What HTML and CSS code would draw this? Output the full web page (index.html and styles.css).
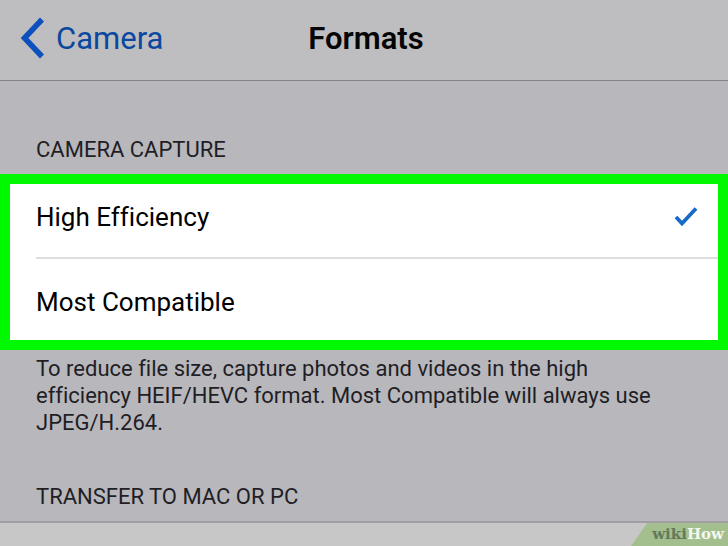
FILE: index.html
```html
<!DOCTYPE html>
<html lang="en">
<head>
  <meta charset="UTF-8">
  <meta name="viewport" content="width=device-width, initial-scale=1.0">
  <title>Formats</title>
  <link rel="stylesheet" href="styles.css">
</head>
<body>

<header class="navbar">
  <a class="back" href="#camera">
    <svg class="chevron" width="24" height="42" viewBox="0 0 24 42" aria-hidden="true">
      <path d="M22 2.500L4.500 21L22 39.500" fill="none" stroke="#0b50bd" stroke-width="5.500"/>
    </svg>
    Camera
  </a>
  <h1>Formats</h1>
</header>

<main>
  <h2 id="capture">Camera Capture</h2>
  <div class="options" role="radiogroup" aria-labelledby="capture">
    <label class="option">
      <input type="radio" name="format" value="efficiency" checked>
      <span>High Efficiency</span>
      <svg class="check" width="24" height="20" viewBox="0 0 24 20" aria-hidden="true">
        <path d="M2 10L8 16.500L22 1.500" fill="none" stroke="#176bc6" stroke-width="3.800"/>
      </svg>
    </label>
    <label class="option">
      <input type="radio" name="format" value="compatible">
      <span>Most Compatible</span>
      <svg class="check" width="24" height="20" viewBox="0 0 24 20" aria-hidden="true">
        <path d="M2 10L8 16.500L22 1.500" fill="none" stroke="#176bc6" stroke-width="3.800"/>
      </svg>
    </label>
  </div>
  <p class="note">To reduce file size, capture photos and videos in the high efficiency HEIF/HEVC format. Most Compatible will always use JPEG/H.264.</p>
  <h2 class="transfer">Transfer to Mac or PC</h2>
</main>

<footer class="bottom">
  <div class="brand"><span class="wiki">wiki</span>How</div>
</footer>

</body>
</html>
```

FILE: styles.css
```css
body {
  font-family: Roboto, "Liberation Sans", sans-serif;
  font-variant-ligatures: none;
  margin: 0;
  min-height: 100vh;
  display: flex;
  flex-direction: column;
  background-color: #b8b7bc;
  color: #1f1e25;
}
.navbar {
  display: grid;
  grid-template-columns: 1fr auto 1fr;
  align-items: center;
  padding: 17px 16px 21px 20px;
  background-color: #bebdbf;
  border-bottom: 1px solid #858488;
}
.back {
  display: flex;
  align-items: center;
  gap: 12px;
  font-size: 31px;
  color: #0a489f;
  text-decoration: none;
}
h1 {
  margin: 0;
  font-size: 31px;
  font-weight: 600;
  color: #050505;
}
main {
  flex: 1;
}
h2 {
  margin: 0;
  padding: 55px 36px 11px;
  font-size: 22px;
  line-height: 27px;
  font-weight: 400;
  text-transform: uppercase;
}
.options {
  border: 10px solid #00f900;
  background-color: #fff;
  color: #000;
  font-size: 26px;
  line-height: 30px;
}
.option {
  position: relative;
  display: flex;
  align-items: center;
  justify-content: space-between;
  margin-left: 26px;
  padding: 18px 20px 25px 0;
}
.option + .option {
  padding: 28px 20px 23px 0;
  border-top: 2px solid #dedee0;
}
.option input {
  position: absolute;
  opacity: 0;
}
.check {
  visibility: hidden;
}
.option input:checked ~ .check {
  visibility: visible;
}
.note {
  margin: 0;
  padding: 5px 60px 0 36px;
  font-size: 22px;
  line-height: 27px;
}
.transfer {
  padding-top: 47px;
}
.bottom {
  display: flex;
  justify-content: flex-end;
  border-top: 2px solid #a19fa4;
  background-color: #c7c7c7;
}
.brand {
  padding: 0 4px 0 21px;
  background-color: #a2bf8d;
  clip-path: polygon(16px 0, 100% 0, 100% 100%, 0 100%);
  font-family: "DejaVu Serif", serif;
  font-size: 15px;
  line-height: 23px;
  font-weight: 700;
  color: #f4f7f1;
}
.wiki {
  color: #65785a;
}
```
